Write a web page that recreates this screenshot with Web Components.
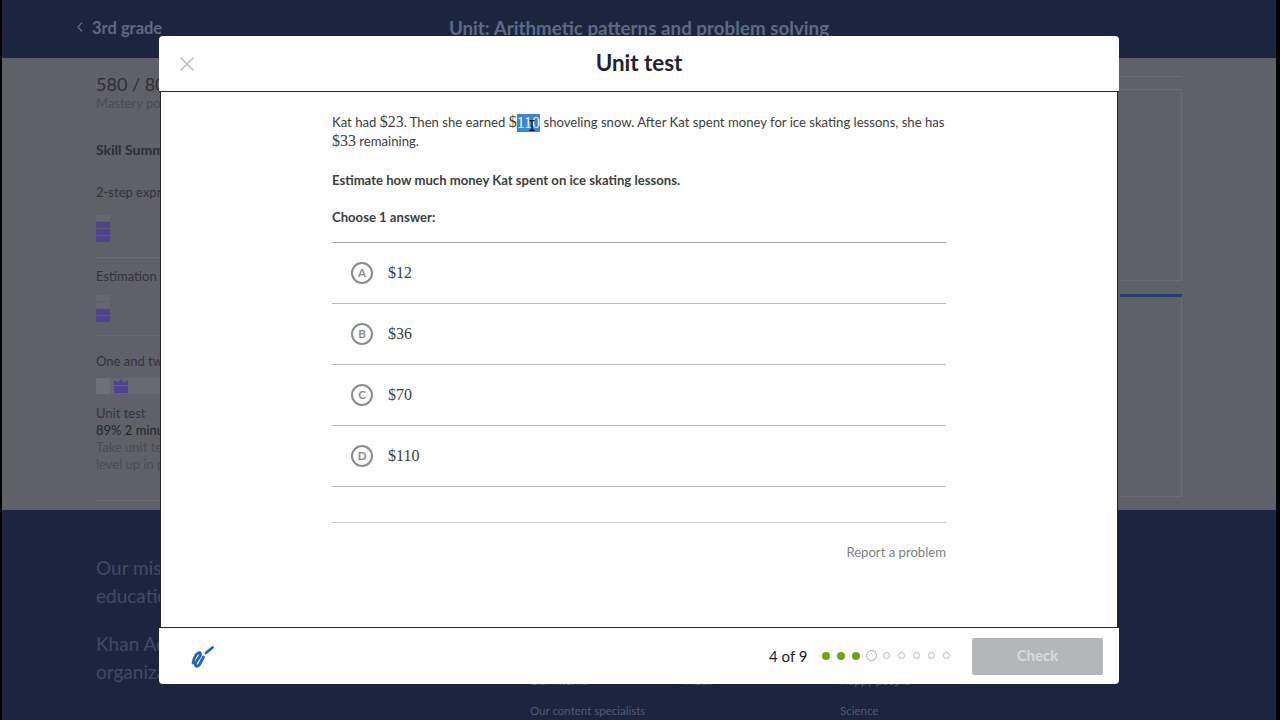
<!DOCTYPE html>
<html><head><meta charset="utf-8"><title>Unit test</title>
<style>html,body{margin:0;padding:0;width:1280px;height:720px;overflow:hidden;background:#000;font-family:Lato,"Open Sans",sans-serif}</style>
</head><body>
<ka-page>
  <ka-topbar></ka-topbar>
  <ka-summary></ka-summary>
  <ka-sitefoot></ka-sitefoot>
</ka-page>
<ka-modal>
  <ka-question></ka-question>
</ka-modal>
<script>
function def(name, html, init){
  customElements.define(name, class extends HTMLElement{
    constructor(){super();const r=this.attachShadow({mode:'open'});r.innerHTML=html;}
    connectedCallback(){ if(init) init(this); }
  });
}
def('ka-page',`<style>:host{display:flex;flex-direction:column;width:1274px;height:720px;margin-left:2px;overflow:hidden;background:#1c2540}</style><slot></slot>`);
def('ka-topbar',`<style>
:host{display:block;flex:none;height:58px;background:#1c2540;color:#5d6a85;font-weight:700;box-sizing:border-box}
.row{display:grid;grid-template-columns:1fr auto 1fr;align-items:center;height:56px}
.back{display:flex;align-items:center;gap:8px;font-size:16.5px;padding-left:74px}
.title{font-size:18.8px;margin-top:-2px}
svg{display:block;margin-top:-3px}
</style><div class="row"><div class="back"><svg width="8" height="12" viewBox="0 0 8 12"><path d="M6 1.5 2 6l4 4.5" fill="none" stroke="#5d6a85" stroke-width="1.3"/></svg><span>3rd grade</span></div><div class="title">Unit: Arithmetic patterns and problem solving</div><div></div></div>`);
def('ka-summary',`<style>
:host{display:flex;flex:none;justify-content:space-between;height:452px;background:#5f6068;color:#33343c;font-size:13px;padding:0 94px 0 94px;box-sizing:border-box;white-space:nowrap}
.left{width:180px;display:flex;flex-direction:column;padding-top:16px}
.pts{font-size:18px;line-height:20px;color:#2e2f37;margin-bottom:1px}
.mut{color:#4a4c55;line-height:17px}
.b{font-weight:700;font-size:14px;line-height:18px;margin-top:29px;color:#2e2f37}
.lab{line-height:16px;color:#33343c}
.bars{display:flex;flex-direction:column;gap:1px;width:14px;margin-top:15px}
.bars i{display:block;height:6px;background:#4f4290}
.bars i.f{background:#666770}
.sep{height:1px;background:#676870;width:64px}
.strip{display:flex;gap:4px;height:16px;background:#666770;margin-top:9px;width:64px}
.strip b{display:block;width:14px;height:16px;background:#6e6f77}
.ut{margin-top:11px;line-height:17px}
.ut div.d{color:#24252c}
.right{width:62px;display:flex;flex-direction:column;padding-top:18px;align-self:stretch}
.right>div{border-right:1px solid #6a6b73}
.r1{height:0;border-bottom:1px solid #6a6b73}
.r2{height:192px;margin-top:12px;border-top:1px solid #696a72;border-bottom:1px solid #696a72;box-sizing:border-box}
.r3{height:3px;margin-top:13px;background:#23406f;border:0 !important}
.r4{height:200px;border-bottom:1px solid #696a72;box-sizing:border-box}
</style>
<div class="left">
 <div class="pts">580 / 800</div>
 <div class="mut">Mastery points</div>
 <div class="b">Skill Summary</div>
 <div class="lab" style="margin-top:25px">2-step expressions</div>
 <div class="bars"><i class="f"></i><i></i><i></i><i></i></div>
 <div class="sep" style="margin-top:15px"></div>
 <div class="lab" style="margin-top:10px">Estimation</div>
 <div class="bars" style="margin-top:11px"><i class="f"></i><i class="f"></i><i></i><i></i></div>
 <div class="sep" style="margin-top:13px"></div>
 <div class="lab" style="margin-top:17px">One and two</div>
 <div class="strip"><b></b><svg width="14" height="16" viewBox="0 0 14 16"><path d="M0 2l3.500 2.500L7 1l3.500 3.500L14 2v5H0zM0 8h14v7H0z" fill="#4f4290"/></svg></div>
 <div class="ut"><div>Unit test</div><div class="d">89% 2 minutes</div><div class="mut">Take unit test</div><div class="mut">level up in points</div></div>
 <div class="sep" style="margin-top:27px"></div>
</div>
<div class="right"><div class="r1"></div><div class="r2"></div><div class="r3"></div><div class="r4"></div></div>`);
def('ka-sitefoot',`<style>
:host{display:block;flex:1;min-height:0;background:#1c2540;color:#3f4b65;padding:44px 0 0 94px;font-size:19px;line-height:28px;white-space:nowrap}
p{margin:0 0 20px}
.links{display:grid;grid-template-columns:155px 155px 155px;margin-top:-40px;margin-left:434px;font-size:11.5px;line-height:30px;color:#4f5a72}
</style>
<p>Our mission<br>education</p>
<p>Khan Academy<br>organization</p>
<div class="links"><span>Our interns</span><span>Math</span><span>Happy people</span><span>Our content specialists</span><span></span><span>Science</span></div>`);
def('ka-progress',`<style>
:host{display:flex;align-items:center;color:#21242c;font-size:15px}
.t{width:49.500px}
.d{display:flex;align-items:center}
.c{width:15px;display:flex;justify-content:center;align-items:center}
i{display:block;box-sizing:border-box;border-radius:50%}
.done{width:8px;height:8px;background:#6fa312}
.cur{width:11px;height:11px;border:1.5px solid #a8a9ab}
.todo{width:7px;height:7px;border:1.5px solid #b5b6b8}
</style><span class="t">4 of 9</span><div class="d">
<span class="c"><i class="done"></i></span><span class="c"><i class="done"></i></span><span class="c"><i class="done"></i></span><span class="c"><i class="cur"></i></span><span class="c"><i class="todo"></i></span><span class="c"><i class="todo"></i></span><span class="c"><i class="todo"></i></span><span class="c"><i class="todo"></i></span><span class="c"><i class="todo"></i></span></div>`);
def('ka-choice',`<style>
:host{display:flex;align-items:center;height:59px;padding-bottom:1px;border-bottom:1px solid #b9babc;padding-left:19px;gap:15px}
.c{width:22px;height:22px;box-sizing:border-box;border:2px solid #8a8b8e;border-radius:50%;display:flex;align-items:center;justify-content:center;font:700 11.5px Lato,sans-serif;color:#8a8b8e}
.v{font:16px "Liberation Serif",serif;color:#3b3e40}
</style><span class="c"></span><span class="v"><slot></slot></span>`, el=>{el.shadowRoot.querySelector('.c').textContent=el.getAttribute('letter')||'';});
def('ka-question',`<style>
:host{display:block;width:614px;color:#3b3e40;font-size:13.12px;line-height:19px;padding-top:21px;position:relative}
m{font:16px/0 "Liberation Serif",serif}
p{margin:0}
.b{font-weight:700}
.sel{background:#3a87d6;color:#e8f2ff;display:inline-block;height:18px;line-height:18px;vertical-align:top;margin-top:1px}
.list{border-top:1px solid #a6a7a9;margin-top:15px}
.rep{display:block;border-top:1px solid #c8c9cb;margin-top:35px;padding-top:20px;text-align:right;color:#7d7f82}
.cursor{position:absolute;left:197px;top:28px;z-index:2}
</style>
<p>Kat had <m>$23</m>. Then she earned <m>$<span class="sel">110</span></m> shoveling snow. After Kat spent money for ice skating lessons, she has <m>$33</m> remaining.</p>
<p class="b" style="margin-top:20px">Estimate how much money Kat spent on ice skating lessons.</p>
<p class="b" style="margin-top:18px">Choose 1 answer:</p>
<div class="list">
<ka-choice letter="A">$12</ka-choice>
<ka-choice letter="B">$36</ka-choice>
<ka-choice letter="C">$70</ka-choice>
<ka-choice letter="D">$110</ka-choice>
</div>
<div class="rep">Report a problem</div>
<svg class="cursor" width="6" height="11" viewBox="0 0 6 11"><path d="M.5.6h1.600L3 1.300 3.900.6h1.600M3 1.300v8.400M.5 10.400h1.600L3 9.700l.9.7h1.600" fill="none" stroke="#000" stroke-width="1.100"/></svg>`);
def('ka-modal',`<style>
:host{display:flex;flex-direction:column;position:absolute;left:159px;top:36px;width:960px;height:648px;border-radius:4px;overflow:hidden}
header{height:56px;display:grid;grid-template-columns:56px 1fr 56px;align-items:center;background:#fff;border-bottom:1px solid #24252c;box-sizing:border-box;flex:none}
h1{margin:0;text-align:center;font-size:22.4px;font-weight:700;color:#21242c;line-height:26px;margin-top:-1px}
.x{display:flex;justify-content:center}
main{flex:1;min-height:0;background:#fff;margin:0 1px;border-left:1px solid #24252c;border-right:1px solid #24252c;border-bottom:1px solid #24252c;display:flex;justify-content:center;box-sizing:border-box}
footer{height:56px;flex:none;background:#fff;display:flex;align-items:center;justify-content:space-between;padding:0 16px 0 31px}
.rt{display:flex;align-items:center;gap:18.500px}
ka-progress{margin-top:-1px}
button{width:131px;height:37px;border:0;border-radius:2px;background:#b5b6b8;color:#d9dadb;font:700 15px Lato,sans-serif;padding:0 0 2px}
</style>
<header><div class="x"><svg width="14" height="14" viewBox="0 0 14 14"><path d="M.7.7l12.600 12.600M13.300.7.7 13.300" stroke="#bcbdbf" stroke-width="1.6" fill="none"/></svg></div><h1>Unit test</h1><div></div></header>
<main><slot></slot></main>
<footer>
<svg width="24" height="26" viewBox="0 0 24 26"><path d="M3 20Q3.500 15.500 6 12 9 8.500 10.500 10.500 11 12.500 8 16 5 20 5.500 22.500 7 24.500 9.500 21.500L13.500 14" fill="none" stroke="#1f63c4" stroke-width="2.800" stroke-linecap="round" stroke-linejoin="round"/><path d="M16 10 22.500 4.500" fill="none" stroke="#1f63c4" stroke-width="2.800" stroke-linecap="round"/></svg>
<div class="rt"><ka-progress></ka-progress><button>Check</button></div>
</footer>`);
</script>
</body></html>
